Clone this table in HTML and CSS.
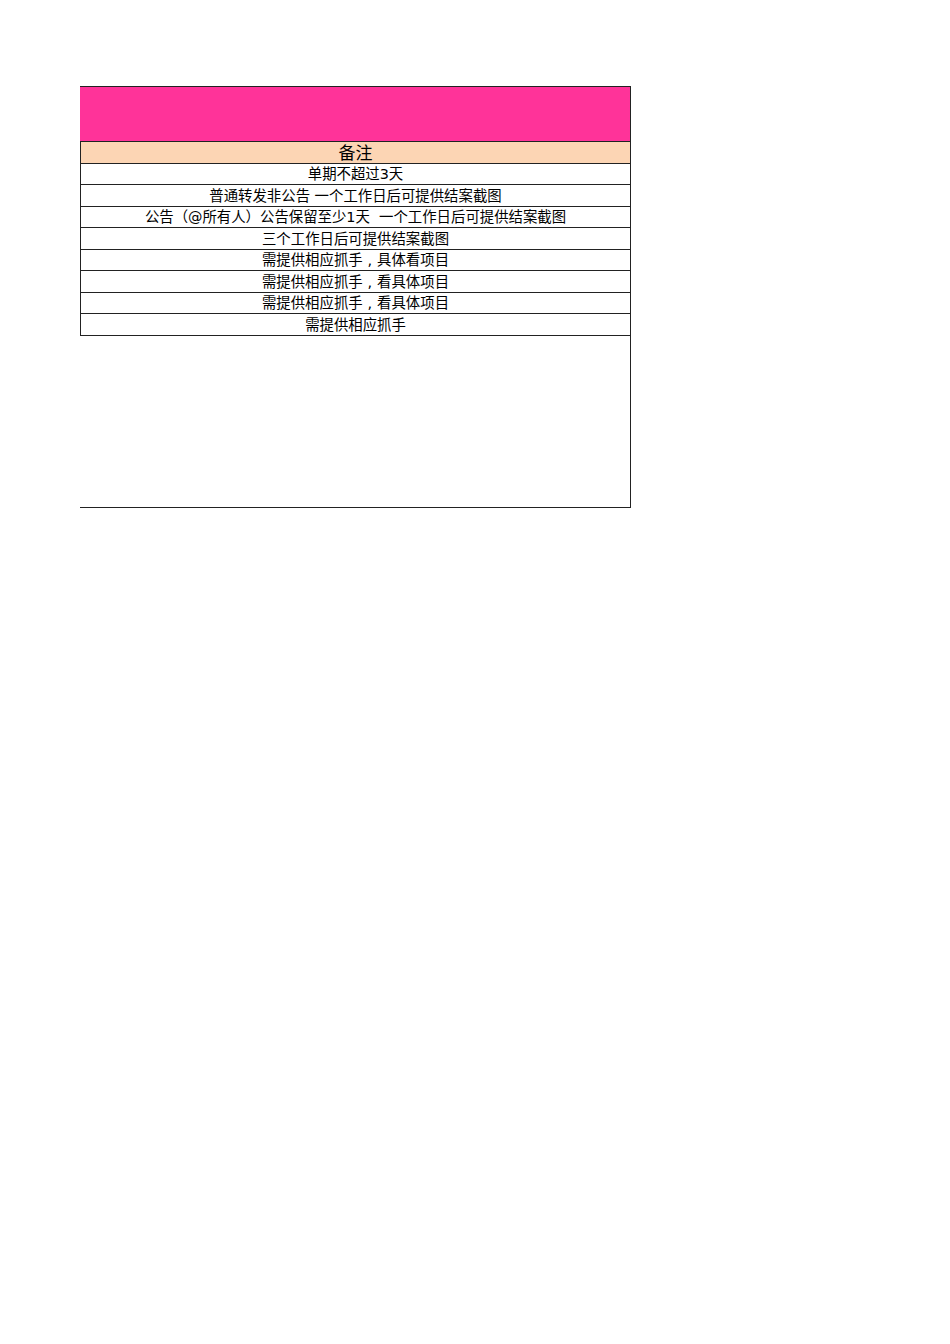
FILE: index.html
```html
<!DOCTYPE html>
<html lang="zh-CN">
<head>
<meta charset="utf-8">
<title>备注</title>
<link rel="stylesheet" href="styles.css">
</head>
<body>
<div class="sheet">
  <div class="title"></div>
  <div class="head">备注</div>
  <div class="rows">
    <div class="row">单期不超过3天</div>
    <div class="row">普通转发非公告 一个工作日后可提供结案截图</div>
    <div class="row">公告（@所有人）公告保留至少1天&nbsp; 一个工作日后可提供结案截图</div>
    <div class="row">三个工作日后可提供结案截图</div>
    <div class="row">需提供相应抓手<span class="punct">,</span>具体看项目</div>
    <div class="row">需提供相应抓手<span class="punct">,</span>看具体项目</div>
    <div class="row">需提供相应抓手<span class="punct">,</span>看具体项目</div>
    <div class="row">需提供相应抓手</div>
  </div>
  <div class="blank"></div>
</div>
</body>
</html>
```

FILE: styles.css
```css
html, body {
  margin: 0;
  padding: 0;
  background: #ffffff;
}
body {
  font-family: "DejaVu Sans", "Noto Sans CJK SC", sans-serif;
  color: #000000;
}
.sheet {
  margin: 86px 0 0 80px;
  width: 551px;
}
.title {
  height: 55px;
  background: #ff3399;
  border-top: 1px solid #222222;
  border-right: 1px solid #222222;
  box-sizing: border-box;
}
.head {
  height: 23px;
  box-sizing: border-box;
  background: #fcd5b4;
  border: 1px solid #222222;
  display: flex;
  align-items: center;
  justify-content: center;
  padding-top: 2px;
  font-size: 17px;
  line-height: 1;
}
.rows {
  display: flex;
  flex-direction: column;
}
.row {
  height: 21px;
  box-sizing: border-box;
  border-left: 1px solid #222222;
  border-right: 1px solid #222222;
  border-bottom: 1px solid #222222;
  display: flex;
  align-items: center;
  justify-content: center;
  padding-top: 1px;
  font-size: 14.4px;
  line-height: 1;
  white-space: pre;
}
.row:nth-child(even) {
  height: 22px;
}
.punct {
  display: inline-block;
  width: 1em;
  text-align: center;
}
.blank {
  height: 172px;
  box-sizing: border-box;
  border-right: 1px solid #222222;
  border-bottom: 1px solid #222222;
}
```
